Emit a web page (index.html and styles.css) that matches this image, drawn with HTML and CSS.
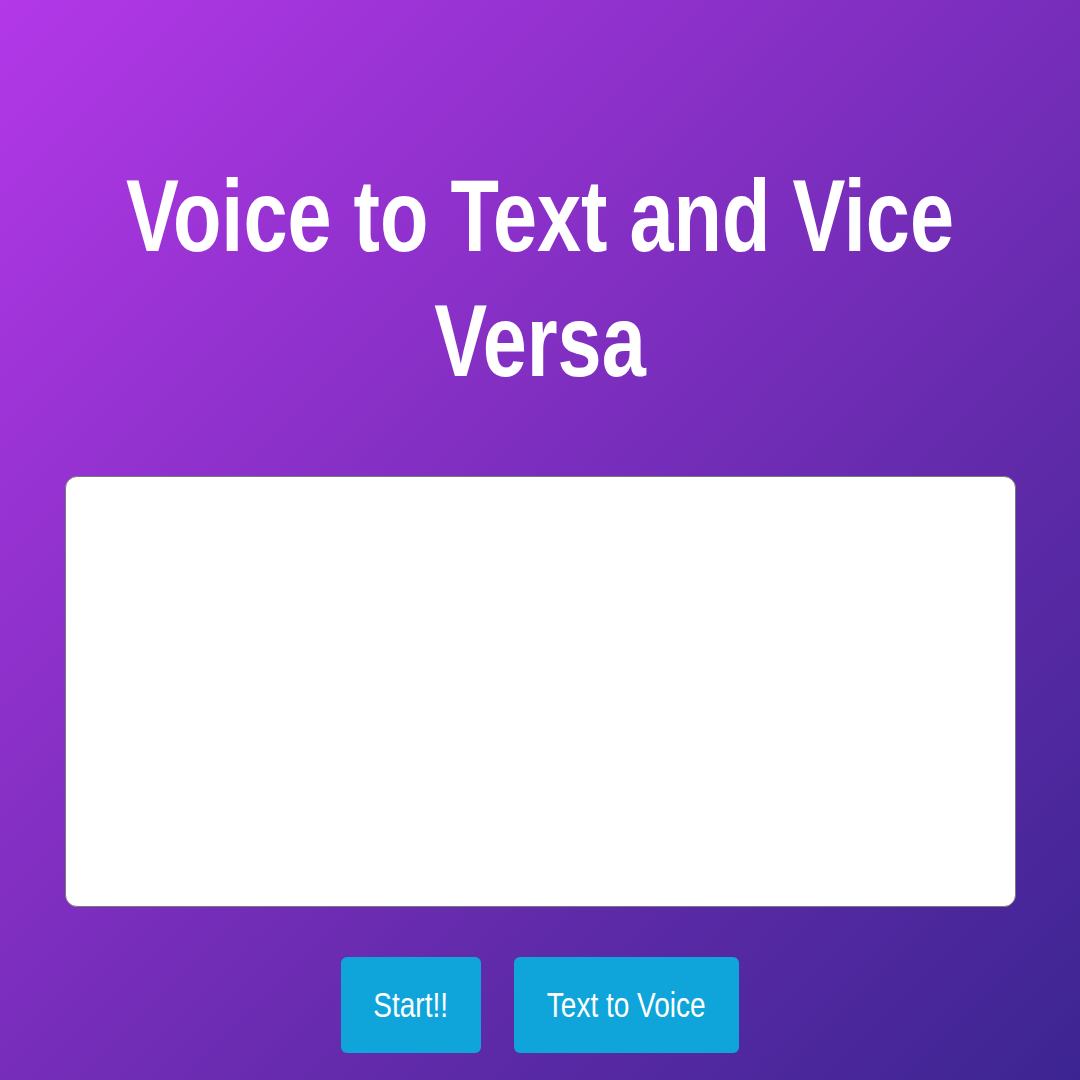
FILE: index.html
```html
<!DOCTYPE html>
<html lang="en">
<head>
<meta charset="utf-8">
<title>Voice to Text and Vice Versa</title>
<link rel="stylesheet" href="styles.css">
</head>
<body>
<main class="page">
  <h1 class="title"><span class="title-text">Voice to Text and Vice Versa</span></h1>
  <textarea class="textbox" aria-label="Text"></textarea>
  <div class="actions">
    <button class="btn btn-start" type="button"><span class="btn-label">Start!!</span></button>
    <button class="btn btn-tts" type="button"><span class="btn-label">Text to Voice</span></button>
  </div>
</main>
</body>
</html>
```

FILE: styles.css
```css
html, body {
  margin: 0;
  padding: 0;
  height: 100%;
}

body {
  overflow: hidden;
  font-family: "Liberation Sans", Arial, sans-serif;
  background: linear-gradient(135deg, #b338e8 0%, #8a30c8 35%, #5e2aa8 70%, #3c2592 100%);
  min-height: 1080px;
}

.page {
  display: flex;
  flex-direction: column;
  align-items: center;
  padding-top: 154px;
}

.title {
  margin: 0;
  width: 1130px;
  flex-shrink: 0;
  text-align: center;
  color: #ffffff;
  font-size: 102px;
  font-weight: 700;
  line-height: 125px;
  transform: scaleX(0.777);
}

.textbox {
  box-sizing: border-box;
  margin-top: 72px;
  width: 951px;
  height: 431px;
  background: #ffffff;
  border: 1px solid #7a7a7a;
  border-radius: 12px;
  resize: none;
  outline: none;
  padding: 10px;
  font-family: "Liberation Sans", Arial, sans-serif;
}

.actions {
  display: flex;
  gap: 33px;
  margin-top: 50px;
}

.btn {
  height: 96px;
  display: flex;
  align-items: center;
  justify-content: center;
  background: #0fa5da;
  color: #ffffff;
  border: none;
  border-radius: 6px;
  padding: 0;
  font-family: "Liberation Sans", Arial, sans-serif;
  font-size: 35px;
  cursor: pointer;
}

.btn-start {
  width: 140px;
}

.btn-tts {
  width: 225px;
}

.btn-label {
  display: inline-block;
  white-space: nowrap;
  transform: scaleX(0.8);
}
```
